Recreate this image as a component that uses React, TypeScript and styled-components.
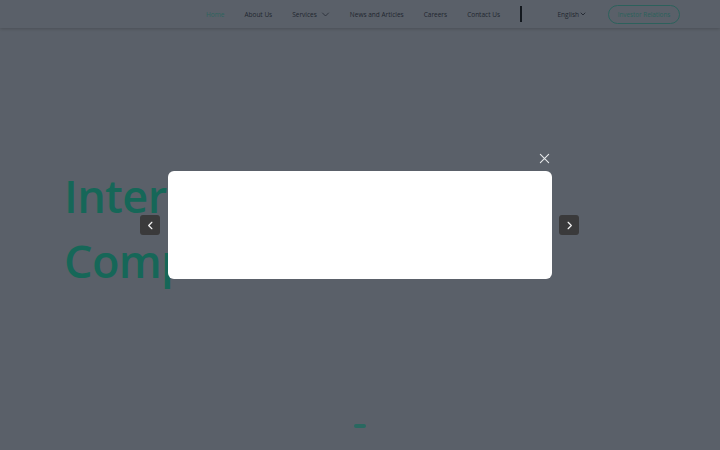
import styled, { createGlobalStyle } from "styled-components"

const GlobalStyle = createGlobalStyle`
  html, body {
    margin: 0;
    padding: 0;
    width: 720px;
    height: 450px;
    overflow: hidden;
    background: #c8d5e8;
    font-family: "Open Sans", "Noto Sans", sans-serif;
  }
  * { box-sizing: border-box; }
`

const Page = styled.div`
  width: 720px;
  height: 450px;
  display: flex;
  flex-direction: column;
  background: #c8d5e8;
`

const Header = styled.header`
  height: 28px;
  flex-shrink: 0;
  display: flex;
  align-items: center;
  justify-content: flex-end;
  padding-right: 40px;
  box-shadow: 0 1px 3px rgba(0, 0, 0, 0.18);
`

const Nav = styled.nav`
  display: flex;
  align-items: center;
  gap: 20px;
`

const NavLink = styled.a<{ $active?: boolean }>`
  display: flex;
  align-items: center;
  gap: 4px;
  font-size: 6.5px;
  font-weight: 500;
  color: ${(p) => (p.$active ? "#64dcd0" : "#4a566c")};
  text-decoration: none;
  white-space: nowrap;
`

const Divider = styled.span`
  width: 1.5px;
  height: 16px;
  background: #2c3543;
  margin-left: 20px;
`

const LangPicker = styled.div`
  display: flex;
  align-items: center;
  gap: 1px;
  margin-left: 36px;
  font-size: 6.5px;
  font-weight: 500;
  color: #4a566c;
`

const OutlineButton = styled.button`
  margin-left: 22px;
  width: 72px;
  height: 19px;
  border-radius: 10px;
  border: 1px solid #62d8cc;
  background: transparent;
  color: #62d8cc;
  font-family: inherit;
  font-size: 6.3px;
  font-weight: 500;
  padding: 0;
`

const Hero = styled.section`
  flex: 1;
  display: flex;
  flex-direction: column;
  padding: 135px 0 22px 64px;
`

const HeroTitle = styled.h1`
  margin: 0;
  font-size: 45px;
  line-height: 65px;
  font-weight: 600;
  letter-spacing: -0.6px;
  color: #32e4c4;
`

const Dots = styled.div`
  margin-top: auto;
  display: flex;
  justify-content: center;
  padding-right: 64px;
`

const Dot = styled.span`
  width: 12px;
  height: 4px;
  border-radius: 2px;
  background: #5ce6d6;
`

const Overlay = styled.div`
  position: fixed;
  inset: 0;
  background: rgba(0, 0, 0, 0.55);
  display: flex;
  align-items: center;
  justify-content: center;
`

const Modal = styled.div`
  position: relative;
  width: 384px;
  height: 108px;
  background: #ffffff;
  border-radius: 6px;
`

const Arrow = styled.button<{ $side: "left" | "right" }>`
  position: absolute;
  top: 44px;
  ${(p) => (p.$side === "left" ? "left: -28px;" : "right: -27px;")}
  width: 20px;
  height: 20px;
  border: none;
  border-radius: 3px;
  background: #3a3a3b;
  display: flex;
  align-items: center;
  justify-content: center;
  padding: 0;
`

const CloseButton = styled.button`
  position: absolute;
  top: -19px;
  right: 2px;
  width: 12px;
  height: 12px;
  border: none;
  background: transparent;
  padding: 0;
  display: flex;
  align-items: center;
  justify-content: center;
`

const Chevron = ({ size = 7, dir = "down", color = "currentColor", width = 1 }: { size?: number; dir?: "down" | "left" | "right"; color?: string; width?: number }) => {
  const d = dir === "down" ? "M2 4l4 4 4-4" : dir === "left" ? "M7.5 2.5L4 6l3.5 3.5" : "M4.5 2.5L8 6l-3.5 3.5"
  return (
    <svg width={size} height={size} viewBox="0 0 12 12" fill="none">
      <path d={d} stroke={color} strokeWidth={width} strokeLinecap="round" strokeLinejoin="round" />
    </svg>
  )
}

export default function App() {
  return (
    <>
      <GlobalStyle />
      <Page>
        <Header>
          <Nav>
            <NavLink $active>Home</NavLink>
            <NavLink>About Us</NavLink>
            <NavLink>
              Services <Chevron size={9} />
            </NavLink>
            <NavLink>News and Articles</NavLink>
            <NavLink>Careers</NavLink>
            <NavLink>Contact Us</NavLink>
          </Nav>
          <Divider />
          <LangPicker>
            English <Chevron size={6} width={1.8} />
          </LangPicker>
          <OutlineButton>Investor Relations</OutlineButton>
        </Header>
        <Hero>
          <HeroTitle>
            International
            <br />
            Companies
          </HeroTitle>
          <Dots>
            <Dot />
          </Dots>
        </Hero>
      </Page>
      <Overlay>
        <Modal>
          <CloseButton>
            <svg width="11" height="11" viewBox="0 0 12 12">
              <path d="M1.5 1.5l9 9M10.5 1.5l-9 9" stroke="#e6e8ea" strokeWidth="1.2" strokeLinecap="round" />
            </svg>
          </CloseButton>
          <Arrow $side="left">
            <Chevron size={11} dir="left" color="#f2f2f2" width={1.3} />
          </Arrow>
          <Arrow $side="right">
            <Chevron size={11} dir="right" color="#f2f2f2" width={1.3} />
          </Arrow>
        </Modal>
      </Overlay>
    </>
  )
}
